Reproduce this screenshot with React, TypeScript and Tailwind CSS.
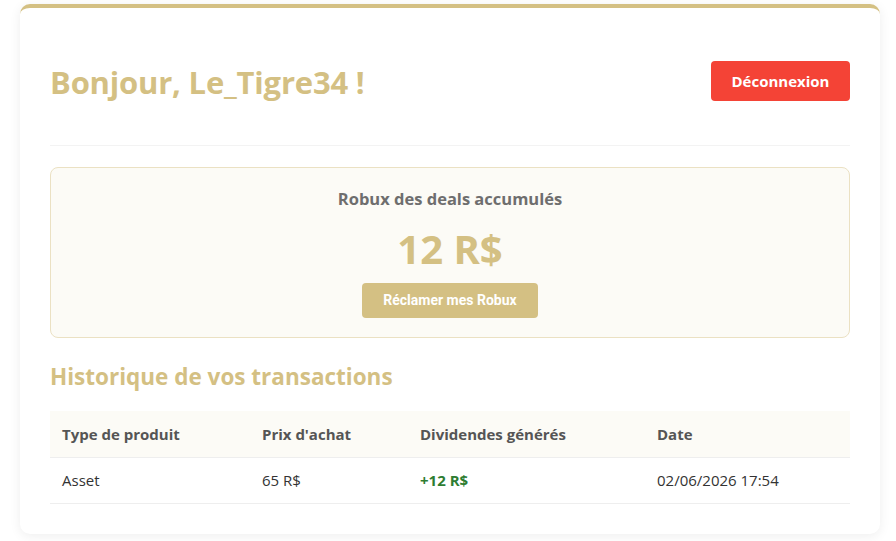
import React from "react";

const gold = "text-[#d4c083]";

export default function App() {
  const rows = [
    { type: "Asset", price: "65 R$", div: "+12 R$", date: "02/06/2026 17:54" },
  ];
  return (
    <div className="min-h-[541px] bg-white pl-5 pr-4 pt-[4px] pb-2" style={{ fontFamily: '"Open Sans", "Noto Sans", sans-serif' }}>
      <div className="rounded-[10px] border-t-4 border-[#d4c083] bg-white px-[30px] pt-[30px] pb-[30px] shadow-[0_2px_12px_rgba(0,0,0,0.07)]">
        <div className="flex items-start justify-between border-b border-[#f3f3f3] pt-[23px] pb-[44px]">
          <h1 className={`mt-[2px] text-[31px] font-bold leading-[38px] tracking-[-0.2px] ${gold}`}>Bonjour, Le_Tigre34 !</h1>
          <button className="flex h-10 w-[139px] items-center justify-center rounded-[4px] bg-[#f44336] text-[15px] font-bold text-white">
            Déconnexion
          </button>
        </div>

        <div className="mt-[21px] flex flex-col items-center rounded-[8px] border border-[#ebe1c3] bg-[#fcfbf6] pt-[19px] pb-[19px]">
          <div className="text-[16.5px] font-bold leading-[24px] text-[#6e6e6e]">Robux des deals accumulés</div>
          <div className={`mt-[14px] text-[40px] font-bold leading-[48px] ${gold}`}>12 R$</div>
          <button
            className="mt-[10px] flex h-[35px] w-[176px] items-center justify-center rounded-[4px] bg-[#d4c083] text-[14px] font-bold text-white"
            style={{ fontFamily: "Roboto, Arial, sans-serif" }}
          >
            Réclamer mes Robux
          </button>
        </div>

        <h2 className={`mt-[24px] text-[22.5px] font-bold leading-[30px] ${gold}`}>Historique de vos transactions</h2>

        <table className="mt-[19px] w-full border-collapse text-left text-[15px]">
          <thead>
            <tr className="h-[46px] border-b border-[#eeeeee] bg-[#fcfbf6]">
              <th className="w-[200px] pl-3 font-bold text-[#555555]">Type de produit</th>
              <th className="w-[158px] pl-3 font-bold text-[#555555]">Prix d'achat</th>
              <th className="w-[237px] pl-3 font-bold text-[#555555]">Dividendes générés</th>
              <th className="pl-3 font-bold text-[#555555]">Date</th>
            </tr>
          </thead>
          <tbody>
            {rows.map((r) => (
              <tr key={r.date} className="h-[46px] border-b border-[#eeeeee]">
                <td className="pl-3 text-[#333333]">{r.type}</td>
                <td className="pl-3 text-[#333333]">{r.price}</td>
                <td className="pl-3 font-bold text-[#2e7d32]">{r.div}</td>
                <td className="pl-3 text-[#333333]">{r.date}</td>
              </tr>
            ))}
          </tbody>
        </table>
      </div>
    </div>
  );
}
